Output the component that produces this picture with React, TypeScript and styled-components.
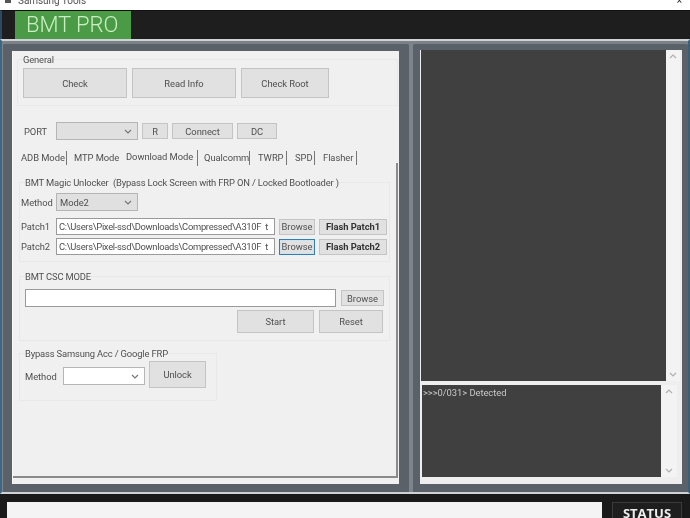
import React from "react";
import styled, { createGlobalStyle } from "styled-components";

const GlobalStyle = createGlobalStyle`
  html, body {
    margin: 0;
    padding: 0;
    background: #1e1e1e;
  }
  * {
    box-sizing: border-box;
  }
`;

const Page = styled.div`
  width: 690px;
  height: 518px;
  overflow: hidden;
  display: flex;
  flex-direction: column;
  background: #1e1e1e;
  font-family: Roboto, "Liberation Sans", Arial, sans-serif;
  font-size: 9.4px;
  color: #444;
  letter-spacing: -0.05px;
  filter: blur(0.35px);
`;

const TitleBar = styled.div`
  height: 10px;
  flex: none;
  background: #fff;
  display: flex;
  align-items: flex-end;
  justify-content: space-between;
  padding: 0 8px 0 5px;
  overflow: hidden;
  line-height: 10px;
  font-size: 10px;
  color: #555;
`;

const TitleText = styled.span`
  margin-left: 7px;
  position: relative;
  top: -4px;
`;

const TitleLeft = styled.div`
  display: flex;
  align-items: flex-start;
  height: 10px;
`;

const AppIcon = styled.span`
  width: 6px;
  height: 3px;
  background: #555;
`;

const CloseGlyph = styled.span`
  position: relative;
  top: -4px;
  color: #333;
`;

const Header = styled.div`
  height: 29px;
  flex: none;
  background: #1e1e1e;
  padding-left: 15px;
  border-left: 2px solid #2b4a63;
  border-top: 1px solid #111;
`;

const Brand = styled.div`
  width: 116px;
  height: 28px;
  margin-left: -2px;
  background: #4b9a46;
  color: #c9eec2;
  font-size: 22px;
  font-weight: 300;
  line-height: 28px;
  padding-left: 11px;
`;

const Main = styled.div`
  height: 455px;
  flex: none;
  display: flex;
  gap: 4px;
  padding: 1px 0 0 1px;
  background: #7d848a;
  border-top: 2px solid #d0d3d6;
  border-bottom: 2px solid #d0d3d6;
  border-left: 2px solid #3d6684;
  border-right: 2px solid #3d5f75;
`;

const Frame = styled.div<{ $width: number }>`
  width: ${(p) => p.$width}px;
  flex: none;
  background: #5a6168;
  border-radius: 3px 3px 0 0;
  border-top: 2px solid #7b8187;
`;

const LeftFrame = styled(Frame)`
  padding: 7px 10px 8px 9px;
`;

const RightFrame = styled(Frame)`
  padding: 6px 6px 8px 7px;
`;

const Surface = styled.div`
  height: 100%;
  background: #f0f0f0;
  padding: 3px 0 6px 4px;
  display: flex;
  flex-direction: column;
  border-left: 1px solid #fafafa;
`;

const Group = styled.fieldset<{ $w: number; $h: number; $mt?: number }>`
  width: ${(p) => p.$w}px;
  height: ${(p) => p.$h}px;
  margin: ${(p) => p.$mt ?? 0}px 0 0;
  padding: 0;
  border: 1px solid #e8e8e8;
  flex: none;
  min-width: 0;
`;

const Legend = styled.legend`
  padding: 0;
  margin-left: 5px;
  line-height: 11px;
  color: #4f4f4f;
  letter-spacing: -0.15px;
`;

const GeneralRow = styled.div`
  display: flex;
  gap: 5px;
  padding: 3px 0 0 5px;
`;

const Button = styled.div<{ $w: number; $h: number; $bold?: boolean; $focus?: boolean }>`
  width: ${(p) => p.$w}px;
  height: ${(p) => p.$h}px;
  flex: none;
  display: flex;
  align-items: center;
  justify-content: center;
  background: #e1e1e1;
  border: 1px solid ${(p) => (p.$focus ? "#2f7fb5" : "#c4c4c4")};
  box-shadow: ${(p) => (p.$focus ? "inset 0 0 0 1px #cfe3ef" : "none")};
  font-weight: ${(p) => (p.$bold ? 700 : 400)};
  color: ${(p) => (p.$bold ? "#333" : "#4f4f4f")};
  white-space: nowrap;
`;

const PortRow = styled.div`
  display: flex;
  align-items: center;
  gap: 4px;
  margin-top: 16px;
  padding-left: 7px;
  height: 18px;
`;

const FieldLabel = styled.span<{ $w: number }>`
  width: ${(p) => p.$w}px;
  flex: none;
  color: #4f4f4f;
`;

const Select = styled.div<{ $w: number; $h: number; $white?: boolean }>`
  width: ${(p) => p.$w}px;
  height: ${(p) => p.$h}px;
  flex: none;
  display: flex;
  align-items: center;
  justify-content: space-between;
  padding: 0 5px 0 3px;
  background: ${(p) => (p.$white ? "#fff" : "#e0e0e0")};
  border: 1px solid #b5b5b5;
  color: #4f4f4f;
`;

const Chevron = () => (
  <svg width="8" height="5" viewBox="0 0 8 5" fill="none">
    <path d="M1 1l3 3 3-3" stroke="#777" strokeWidth="1.2" />
  </svg>
);

const Tabs = styled.div`
  display: flex;
  align-items: center;
  height: 17px;
  margin-top: 9px;
  padding-left: 4px;
`;

const Tab = styled.span<{ $active?: boolean; $w: number; $pl?: number; $sep?: boolean }>`
  width: ${(p) => p.$w}px;
  flex: none;
  height: ${(p) => (p.$active ? 16 : 14)}px;
  line-height: ${(p) => (p.$active ? 13 : 14)}px;
  padding-left: ${(p) => p.$pl ?? 0}px;
  color: #4f4f4f;
  border-right: ${(p) => (p.$sep ? "1px solid #777" : "none")};
  white-space: nowrap;
`;

const TabPanel = styled.div`
  flex: 1;
  min-height: 0;
  margin: -3px 1px 0 -4px;
  padding: 14px 0 0 6px;
  border-right: 2px solid #8a8a8a;
  border-bottom: 2px solid #8a8a8a;
  display: flex;
  flex-direction: column;
`;

const FormRow = styled.div<{ $mt: number }>`
  display: flex;
  align-items: center;
  gap: 4px;
  margin-top: ${(p) => p.$mt}px;
  padding-left: 1px;
`;

const Input = styled.div<{ $w: number; $h: number }>`
  width: ${(p) => p.$w}px;
  height: ${(p) => p.$h}px;
  flex: none;
  overflow: hidden;
  white-space: nowrap;
  background: #fff;
  border: 1px solid #9a9a9a;
  line-height: ${(p) => p.$h - 2}px;
  padding-left: 2px;
  color: #4f4f4f;
  letter-spacing: -0.3px;
`;

const CscRow = styled.div`
  display: flex;
  align-items: center;
  gap: 5px;
  padding: 7px 0 0 5px;
`;

const ActionRow = styled.div`
  display: flex;
  gap: 5px;
  margin: 3px 0 0 217px;
`;

const BypassRow = styled.div`
  display: flex;
  align-items: flex-start;
  gap: 4px;
  padding: 2px 0 0 5px;
`;

const MethodWrap = styled.div`
  display: flex;
  align-items: center;
  height: 18px;
  margin-top: 6px;
`;

const RightSurface = styled.div`
  height: 100%;
  background: #eeeeee;
  display: flex;
  flex-direction: column;
  padding: 0 2px 5px 1px;
  gap: 4px;
`;

const Console = styled.div<{ $h: number; $inset: number }>`
  height: ${(p) => p.$h}px;
  flex: none;
  display: flex;
  padding-right: ${(p) => p.$inset}px;
  padding-left: ${(p) => (p.$inset ? 1 : 0)}px;
`;

const Screen = styled.div`
  flex: 1;
  background: #404040;
  color: #c8c8c8;
  padding: 2px 1px;
  line-height: 11px;
`;

const ScrollBar = styled.div<{ $w: number }>`
  width: ${(p) => p.$w}px;
  flex: none;
  background: #f3f3f3;
  display: flex;
  flex-direction: column;
  justify-content: space-between;
  align-items: center;
  padding: 4px 0;
`;

const Arrow = ({ up }: { up?: boolean }) => (
  <svg width="8" height="5" viewBox="0 0 8 5" fill="none">
    <path d={up ? "M1 4l3-3 3 3" : "M1 1l3 3 3-3"} stroke="#b0b0b0" strokeWidth="1.2" />
  </svg>
);

const Footer = styled.div`
  flex: 1;
  display: flex;
  gap: 10px;
  padding: 8px 8px 0 7px;
  background: #1a1a1a;
`;

const StatusInput = styled.div`
  flex: 1;
  background: #f4f4f4;
`;

const StatusBox = styled.div`
  width: 70px;
  background: #1e1e1e;
  border: 1px solid #3a3a3a;
  color: #eee;
  font-family: "Open Sans", sans-serif;
  font-weight: 700;
  font-size: 13px;
  letter-spacing: 0;
  text-align: center;
  line-height: 20px;
`;

const App = () => {
  return (
    <>
      <GlobalStyle />
      <Page>
        <TitleBar>
          <TitleLeft>
            <AppIcon />
            <TitleText>Samsung Tools</TitleText>
          </TitleLeft>
          <CloseGlyph>×</CloseGlyph>
        </TitleBar>
        <Header>
          <Brand>BMT PRO</Brand>
        </Header>
        <Main>
          <LeftFrame $width={406}>
            <Surface>
              <Group $w={381} $h={52}>
                <Legend>General</Legend>
                <GeneralRow>
                  <Button $w={104} $h={30}>Check</Button>
                  <Button $w={104} $h={30}>Read Info</Button>
                  <Button $w={88} $h={30}>Check Root</Button>
                </GeneralRow>
              </Group>
              <PortRow>
                <FieldLabel $w={28}>PORT</FieldLabel>
                <Select $w={82} $h={18}><span /><Chevron /></Select>
                <Button $w={26} $h={16}>R</Button>
                <Button $w={61} $h={16}>Connect</Button>
                <Button $w={40} $h={16}>DC</Button>
              </PortRow>
              <Tabs>
                <Tab $w={46} $sep>ADB Mode</Tab>
                <Tab $w={59} $pl={7}>MTP Mode</Tab>
                <Tab $w={72} $active $sep>Download Mode</Tab>
                <Tab $w={52} $pl={6} $sep>Qualcomm</Tab>
                <Tab $w={37} $pl={8} $sep>TWRP</Tab>
                <Tab $w={28} $pl={8} $sep>SPD</Tab>
                <Tab $w={42} $pl={8} $sep>Flasher</Tab>
              </Tabs>
              <TabPanel>
                <Group $w={371} $h={85}>
                  <Legend>BMT Magic Unlocker&nbsp; (Bypass Lock Screen with FRP ON / Locked Bootloader )</Legend>
                  <FormRow $mt={5}>
                    <FieldLabel $w={31}>Method</FieldLabel>
                    <Select $w={82} $h={18}>Mode2<Chevron /></Select>
                  </FormRow>
                  <FormRow $mt={7}>
                    <FieldLabel $w={31}>Patch1</FieldLabel>
                    <Input $w={219} $h={17}>C:\Users\Pixel-ssd\Downloads\Compressed\A310F&nbsp; t</Input>
                    <Button $w={36} $h={16}>Browse</Button>
                    <Button $w={68} $h={16} $bold>Flash Patch1</Button>
                  </FormRow>
                  <FormRow $mt={3}>
                    <FieldLabel $w={31}>Patch2</FieldLabel>
                    <Input $w={219} $h={17}>C:\Users\Pixel-ssd\Downloads\Compressed\A310F&nbsp; t</Input>
                    <Button $w={36} $h={16} $focus>Browse</Button>
                    <Button $w={68} $h={16} $bold>Flash Patch2</Button>
                  </FormRow>
                </Group>
                <Group $w={371} $h={70} $mt={9}>
                  <Legend>BMT CSC MODE</Legend>
                  <CscRow>
                    <Input $w={311} $h={18} />
                    <Button $w={43} $h={16}>Browse</Button>
                  </CscRow>
                  <ActionRow>
                    <Button $w={77} $h={23}>Start</Button>
                    <Button $w={64} $h={23}>Reset</Button>
                  </ActionRow>
                </Group>
                <Group $w={198} $h={53} $mt={7}>
                  <Legend>Bypass Samsung Acc / Google FRP</Legend>
                  <BypassRow>
                    <MethodWrap>
                      <FieldLabel $w={38}>Method</FieldLabel>
                      <Select $w={82} $h={18} $white><span /><Chevron /></Select>
                    </MethodWrap>
                    <Button $w={57} $h={27}>Unlock</Button>
                  </BypassRow>
                </Group>
              </TabPanel>
            </Surface>
          </LeftFrame>
          <RightFrame $width={275}>
            <RightSurface>
              <Console $h={331} $inset={0}>
                <Screen />
                <ScrollBar $w={14}><Arrow up /><Arrow /></ScrollBar>
              </Console>
              <Console $h={92} $inset={3}>
                <Screen>&gt;&gt;&gt;0/031&gt; Detected</Screen>
                <ScrollBar $w={16}><Arrow up /><Arrow /></ScrollBar>
              </Console>
            </RightSurface>
          </RightFrame>
        </Main>
        <Footer>
          <StatusInput />
          <StatusBox>STATUS</StatusBox>
        </Footer>
      </Page>
    </>
  );
};

export default App;
